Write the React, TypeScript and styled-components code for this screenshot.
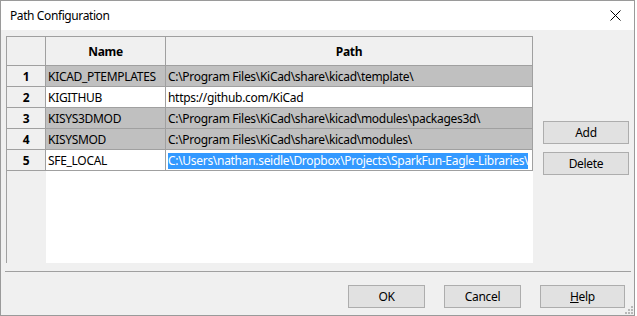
import React from "react";
import styled, { createGlobalStyle } from "styled-components";

const Global = createGlobalStyle`
  html, body { margin: 0; padding: 0; background: #ffffff; }
  body {
    font-family: "Noto Sans", "Open Sans", sans-serif;
    font-size: 12px;
    letter-spacing: -0.3px;
    color: #000;
  }
  * { box-sizing: border-box; }
`;

const Window = styled.div`
  position: relative;
  width: 635px;
  height: 316px;
  border: 1px solid #9a9a9a;
  background: #f0f0f0;
  display: flex;
  flex-direction: column;
`;

const TitleBar = styled.div`
  height: 29px;
  background: #ffffff;
  display: flex;
  align-items: center;
  justify-content: space-between;
  padding: 0 9px 0 9px;
`;

const Title = styled.span`
  font-size: 12px;
  letter-spacing: -0.4px;
  line-height: 16px;
  padding-top: 1px;
`;

const CloseIcon = styled.svg`
  width: 11px;
  height: 11px;
  margin-right: 4px;
`;

const Main = styled.div`
  display: flex;
  height: 233px;
  padding: 6px 5px 0 5px;
  gap: 10px;
`;

const Grid = styled.div`
  width: 527px;
  height: 227px;
  display: grid;
  grid-template-columns: 39px 120px 367px;
  grid-template-rows: 29px repeat(5, 21px) 1fr;
  border-top: 1px solid #a0a0a0;
  border-left: 1px solid #a0a0a0;
`;

const HeaderCell = styled.div`
  background: #f0f0f0;
  border-right: 1px solid #a0a0a0;
  border-bottom: 1px solid #a0a0a0;
  font-weight: 700;
  display: flex;
  align-items: center;
  justify-content: center;
  padding-top: 1px;
`;

const RowLabel = styled(HeaderCell)``;

const Cell = styled.div<{ $shaded?: boolean }>`
  background: ${(p) => (p.$shaded ? "#c0c0c0" : "#ffffff")};
  border-right: 1px solid #a0a0a0;
  border-bottom: 1px solid #a0a0a0;
  display: flex;
  align-items: center;
  padding: 1px 0 0 2px;
  white-space: nowrap;
  overflow: hidden;
`;

const Selected = styled.span`
  background: #3399ff;
  color: #ffffff;
  line-height: 16px;
`;

const LabelFiller = styled.div`
  background: #f0f0f0;
`;

const DataFiller = styled.div`
  grid-column: span 2;
  background: #ffffff;
`;

const Side = styled.div`
  width: 86px;
  display: flex;
  flex-direction: column;
  gap: 8px;
  padding-top: 85px;
`;

const Button = styled.button<{ $w?: number }>`
  width: ${(p) => p.$w ?? 86}px;
  height: 23px;
  background: #e1e1e1;
  border: 1px solid #adadad;
  font-family: inherit;
  font-size: 12px;
  letter-spacing: -0.3px;
  color: #000;
  padding: 0;
  line-height: 16px;
`;

const Separator = styled.div`
  margin: 8px 3px 0 4px;
  height: 1px;
  background: #a0a0a0;
`;

const Footer = styled.div`
  display: flex;
  justify-content: flex-end;
  gap: 19px;
  padding: 13px 9px 7px 0;
`;

const Grip = styled.svg`
  position: absolute;
  right: 1px;
  bottom: 1px;
  width: 8px;
  height: 8px;
`;

const rows = [
  { name: "KICAD_PTEMPLATES", path: "C:\\Program Files\\KiCad\\share\\kicad\\template\\", shaded: true },
  { name: "KIGITHUB", path: "https://github.com/KiCad", shaded: false },
  { name: "KISYS3DMOD", path: "C:\\Program Files\\KiCad\\share\\kicad\\modules\\packages3d\\", shaded: true },
  { name: "KISYSMOD", path: "C:\\Program Files\\KiCad\\share\\kicad\\modules\\", shaded: true },
  { name: "SFE_LOCAL", path: "C:\\Users\\nathan.seidle\\Dropbox\\Projects\\SparkFun-Eagle-Libraries\\", shaded: false, selected: true },
];

export default function App() {
  return (
    <>
      <Global />
      <Window>
        <TitleBar>
          <Title>Path Configuration</Title>
          <CloseIcon viewBox="0 0 11 11">
            <path d="M0.5 0.5 L10.5 10.5 M10.5 0.5 L0.5 10.5" stroke="#000" strokeWidth="1" fill="none" />
          </CloseIcon>
        </TitleBar>
        <Main>
          <Grid>
            <HeaderCell />
            <HeaderCell>Name</HeaderCell>
            <HeaderCell>Path</HeaderCell>
            {rows.map((r, i) => (
              <React.Fragment key={r.name}>
                <RowLabel>{i + 1}</RowLabel>
                <Cell $shaded={r.shaded}>{r.name}</Cell>
                <Cell $shaded={r.shaded}>
                  {r.selected ? <Selected>{r.path}</Selected> : r.path}
                </Cell>
              </React.Fragment>
            ))}
            <LabelFiller />
            <DataFiller />
          </Grid>
          <Side>
            <Button>Add</Button>
            <Button>Delete</Button>
          </Side>
        </Main>
        <Separator />
        <Footer>
          <Button $w={77}>OK</Button>
          <Button $w={77}>Cancel</Button>
          <Button $w={85}>
            <u>H</u>elp
          </Button>
        </Footer>
        <Grip viewBox="0 0 8 8">
          {[
            [6, 0],
            [6, 3],
            [3, 3],
            [6, 6],
            [3, 6],
            [0, 6],
          ].map(([x, y]) => (
            <rect key={`${x}-${y}`} x={x} y={y} width="2" height="2" fill="#b8b8b8" />
          ))}
        </Grip>
      </Window>
    </>
  );
}
